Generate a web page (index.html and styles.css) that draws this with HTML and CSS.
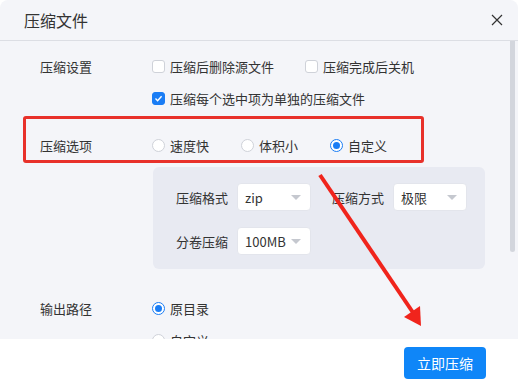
FILE: index.html
```html
<!DOCTYPE html>
<html lang="zh-CN">
<head>
  <meta charset="UTF-8" />
  <title>压缩文件</title>
  <link rel="stylesheet" href="styles.css">
</head>
<body>
  <div class="dialog">
    <div class="header">
      <span class="title">压缩文件</span>
      <span class="close">
        <svg width="12" height="12" viewBox="0 0 12 12"><path d="M1 1L11 11M11 1L1 11" stroke="#333" stroke-width="1.2" fill="none"/></svg>
      </span>
    </div>

    <div class="content">
      <div class="row row-first">
        <div class="label">压缩设置</div>
        <label class="opt"><span class="check"></span>压缩后删除源文件</label>
        <label class="opt opt-wide"><span class="check"></span>压缩完成后关机</label>
      </div>
      <div class="row row-sub">
        <div class="label"></div>
        <label class="opt">
          <span class="check checked">
            <svg width="9" height="9" viewBox="0 0 9 9"><path d="M1.5 4.6L3.6 6.7L7.6 2.2" stroke="#fff" stroke-width="1.4" fill="none"/></svg>
          </span>压缩每个选中项为单独的压缩文件
        </label>
      </div>
      <div class="row row-mode">
        <div class="label">压缩选项</div>
        <label class="opt radio-opt"><span class="radio"></span>速度快</label>
        <label class="opt radio-opt"><span class="radio"></span>体积小</label>
        <label class="opt"><span class="radio on"></span>自定义</label>
      </div>

      <div class="panel">
        <div class="panel-row">
          <span class="plabel">压缩格式</span>
          <div class="select"><span>zip</span><i class="caret"></i></div>
          <span class="plabel plabel-2">压缩方式</span>
          <div class="select"><span>极限</span><i class="caret"></i></div>
        </div>
        <div class="panel-row">
          <span class="plabel">分卷压缩</span>
          <div class="select"><span>100MB</span><i class="caret"></i></div>
        </div>
      </div>

      <div class="row row-out">
        <div class="label">输出路径</div>
        <label class="opt"><span class="radio on"></span>原目录</label>
      </div>
      <div class="row row-sub">
        <div class="label"></div>
        <label class="opt"><span class="radio"></span>自定义</label>
      </div>

      <div class="scrollbar"></div>
    </div>

    <div class="footer">
      <button class="btn">立即压缩</button>
    </div>

    <div class="mark-box"></div>
    <svg class="mark-arrow" width="518" height="386" viewBox="0 0 518 386">
      <path d="M320 175L414 314" stroke="#f0241c" stroke-width="4" fill="none"/>
      <path d="M421 326L404 317L420 306Z" fill="#f0241c"/>
    </svg>
  </div>
</body>
</html>
```

FILE: styles.css
```css
* {
  box-sizing: border-box;
}
html, body {
  margin: 0;
  background: #fff;
}
body {
  font-family: "Noto Sans CJK SC", "Noto Sans", sans-serif;
  font-size: 13px;
  color: #333;
}
.dialog {
  position: relative;
  width: 518px;
  height: 386px;
  display: flex;
  flex-direction: column;
  background: #f4f5f9;
  border-radius: 8px 8px 0 0;
  overflow: hidden;
}
.header {
  height: 41px;
  flex: none;
  display: flex;
  align-items: center;
  justify-content: space-between;
  padding: 0 15px 0 24px;
  border-bottom: 1px solid #dcdee4;
}
.title {
  font-size: 16px;
  color: #333;
}
.close {
  display: flex;
  width: 12px;
  height: 12px;
}
.content {
  position: relative;
  flex: 1;
  overflow: hidden;
  padding-top: 13px;
}
.row {
  display: flex;
  align-items: center;
  height: 24px;
  padding-left: 40px;
}
.row-sub {
  margin-top: 8px;
}
.row-mode {
  margin-top: 23px;
}
.row-out {
  margin-top: 27px;
}
.label {
  width: 112px;
  flex: none;
}
.opt {
  display: flex;
  align-items: center;
  gap: 5px;
  white-space: nowrap;
}
.opt-wide {
  margin-left: 31px;
}
.radio-opt {
  margin-right: 32px;
}
.check {
  width: 13px;
  height: 13px;
  border: 1px solid #cfd2d9;
  border-radius: 3px;
  background: #fff;
  display: flex;
  align-items: center;
  justify-content: center;
}
.check.checked {
  background: #1a7df5;
  border-color: #1a7df5;
}
.radio {
  width: 13px;
  height: 13px;
  border: 1px solid #cfd2d9;
  border-radius: 50%;
  background: #fff;
  display: flex;
  align-items: center;
  justify-content: center;
}
.radio.on {
  border-color: #1a7df5;
}
.radio.on::after {
  content: "";
  width: 7px;
  height: 7px;
  border-radius: 50%;
  background: #1a7df5;
}
.panel {
  margin: 10px 0 0 153px;
  width: 332px;
  height: 102px;
  background: #e8eaf2;
  border-radius: 6px;
  padding: 16px 0 0 23px;
  display: flex;
  flex-direction: column;
  gap: 16px;
}
.panel-row {
  display: flex;
  align-items: center;
  height: 28px;
}
.plabel {
  width: 61px;
  flex: none;
}
.plabel-2 {
  margin-left: 21px;
}
.select {
  width: 74px;
  height: 28px;
  background: #fff;
  border: 1px solid #e3e5ec;
  border-radius: 4px;
  display: flex;
  align-items: center;
  justify-content: space-between;
  padding: 0 9px 0 7px;
}
.caret {
  width: 0;
  height: 0;
  border-left: 5px solid transparent;
  border-right: 5px solid transparent;
  border-top: 5px solid #c5c8cf;
}
.scrollbar {
  position: absolute;
  right: 3px;
  top: 0;
  width: 5px;
  height: 211px;
  background: #d3d6dd;
  border-radius: 0 0 3px 3px;
}
.footer {
  height: 47px;
  flex: none;
  background: #fff;
  display: flex;
  align-items: center;
  justify-content: flex-end;
  padding-right: 32px;
}
.btn {
  width: 82px;
  height: 32px;
  border: none;
  border-radius: 4px;
  background: #0f86f8;
  color: #fff;
  font-family: inherit;
  font-size: 14px;
}
.mark-box {
  position: absolute;
  left: 23px;
  top: 116px;
  width: 401px;
  height: 47px;
  border: 3px solid #e8312a;
  border-radius: 3px;
}
.mark-arrow {
  position: absolute;
  left: 0;
  top: 0;
  pointer-events: none;
}
```
